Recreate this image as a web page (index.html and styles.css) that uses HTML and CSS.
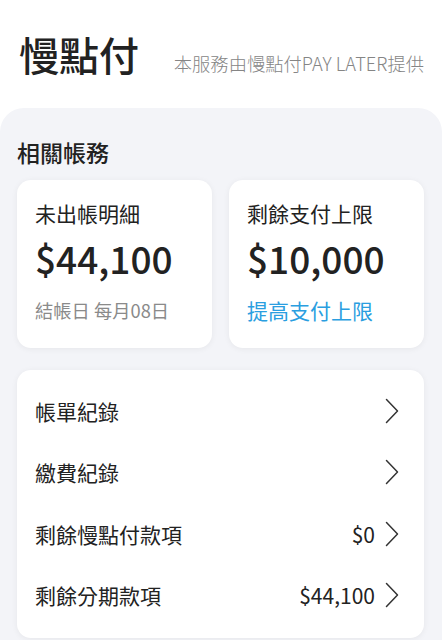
FILE: index.html
```html
<!DOCTYPE html>
<html lang="zh-Hant">
<head>
<meta charset="utf-8">
<link rel="stylesheet" href="styles.css">
</head>
<body>
<header class="header">
  <h1 class="title">慢點付</h1>
  <p class="subtitle">本服務由慢點付PAY LATER提供</p>
</header>
<main class="panel">
  <h2 class="section-title">相關帳務</h2>
  <div class="cards">
    <div class="card">
      <div class="card-label">未出帳明細</div>
      <div class="card-amount">$44,100</div>
      <div class="card-note">結帳日 每月08日</div>
    </div>
    <div class="card">
      <div class="card-label">剩餘支付上限</div>
      <div class="card-amount">$10,000</div>
      <div class="card-link">提高支付上限</div>
    </div>
  </div>
  <ul class="list">
    <li class="row"><span class="row-label">帳單紀錄</span><span class="row-right"><svg class="chev" viewBox="0 0 14 26" width="14" height="26"><path d="M1.5 1.5 L12.5 13 L1.5 24.5"/></svg></span></li>
    <li class="row"><span class="row-label">繳費紀錄</span><span class="row-right"><svg class="chev" viewBox="0 0 14 26" width="14" height="26"><path d="M1.5 1.5 L12.5 13 L1.5 24.5"/></svg></span></li>
    <li class="row"><span class="row-label">剩餘慢點付款項</span><span class="row-right"><span class="row-value">$0</span><svg class="chev" viewBox="0 0 14 26" width="14" height="26"><path d="M1.5 1.5 L12.5 13 L1.5 24.5"/></svg></span></li>
    <li class="row"><span class="row-label">剩餘分期款項</span><span class="row-right"><span class="row-value">$44,100</span><svg class="chev" viewBox="0 0 14 26" width="14" height="26"><path d="M1.5 1.5 L12.5 13 L1.5 24.5"/></svg></span></li>
  </ul>
</main>
</body>
</html>
```
FILE: styles.css
```css
* { box-sizing: border-box; }
html, body { margin: 0; padding: 0; background: #ffffff; }
body {
  font-family: "Noto Sans CJK TC", "Noto Sans", sans-serif;
  color: #222222;
  width: 442px;
  height: 640px;
  overflow: hidden;
}
.header {
  display: flex;
  align-items: baseline;
  padding: 24px 18px 0 19px;
  height: 108px;
}
.title {
  margin: 0;
  font-size: 40px;
  font-weight: 500;
  line-height: 60px;
  color: #222;
}
.subtitle {
  margin: 0 0 0 auto;
  font-size: 18.3px;
  font-weight: 300;
  color: #858585;
  line-height: 24px;
}
.panel {
  background: #f3f4f8;
  border-radius: 24px 24px 0 0;
  padding: 28px 18px 0 17px;
  height: 532px;
}
.section-title {
  margin: 0;
  font-size: 23px;
  font-weight: 500;
  line-height: 32px;
  color: #222;
}
.cards {
  display: grid;
  grid-template-columns: 195px 195px;
  gap: 17px;
  margin-top: 12px;
}
.card {
  background: #fff;
  border-radius: 14px;
  height: 168px;
  padding: 18px 18px 0 18px;
  box-shadow: 0 1px 6px rgba(0, 0, 0, 0.06);
}
.card-label {
  font-size: 21px;
  line-height: 30px;
  color: #222;
}
.card-amount {
  font-size: 37px;
  font-weight: 500;
  line-height: 52px;
  margin-top: 4px;
  color: #222;
}
.card-note {
  font-size: 18.3px;
  line-height: 26px;
  color: #8a8a8a;
  margin-top: 13px;
}
.card-link {
  font-size: 21px;
  line-height: 26px;
  color: #2a9ee0;
  margin-top: 13px;
}
.list {
  list-style: none;
  margin: 22px 0 0 0;
  padding: 10px 25px 12px 18px;
  background: #fff;
  border-radius: 14px;
  box-shadow: 0 1px 6px rgba(0, 0, 0, 0.06);
}
.row {
  display: flex;
  align-items: center;
  justify-content: space-between;
  height: 61.5px;
}
.row-label {
  font-size: 21px;
  color: #222;
}
.row-right {
  display: flex;
  align-items: center;
  gap: 10px;
}
.row-value {
  font-size: 21px;
  color: #222;
}
.chev {
  display: block;
}
.chev path {
  fill: none;
  stroke: #333;
  stroke-width: 1.5;
  stroke-linecap: round;
  stroke-linejoin: round;
}
```
